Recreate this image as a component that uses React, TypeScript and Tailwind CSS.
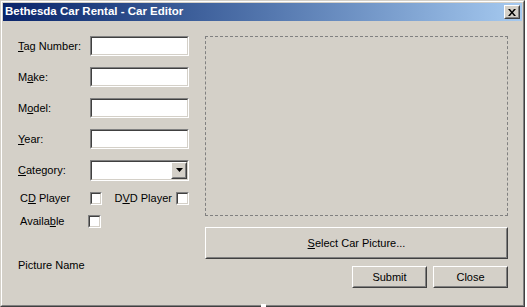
import type { ReactNode } from 'react'

const font = { fontFamily: '"Liberation Sans", Arial, sans-serif' }

function Sunken({ className, children }: { className?: string; children?: ReactNode }) {
  return (
    <div className={`border border-t-[#808080] border-l-[#808080] border-b-white border-r-white ${className ?? ''}`}>
      <div className="h-full w-full border border-t-[#404040] border-l-[#404040] border-b-[#d4d0c8] border-r-[#d4d0c8] bg-white">
        {children}
      </div>
    </div>
  )
}

function Raised({ className, children }: { className?: string; children?: ReactNode }) {
  return (
    <div className={`border border-t-white border-l-white border-b-[#404040] border-r-[#404040] ${className ?? ''}`}>
      <div className="flex h-full w-full items-center justify-center border border-t-[#d4d0c8] border-l-[#d4d0c8] border-b-[#808080] border-r-[#808080] bg-[#d4d0c8]">
        {children}
      </div>
    </div>
  )
}

function Field({ u, rest, pre = '' }: { pre?: string; u: string; rest: string }) {
  return (
    <div className="flex h-[20px] items-center">
      <span className="w-[72px] text-[11px] text-black">
        {pre}
        <span className="underline underline-offset-1">{u}</span>
        {rest}
      </span>
      <Sunken className="h-[20px] w-[99px]" />
    </div>
  )
}

export default function App() {
  return (
    <div className="relative h-[307px] w-[527px] bg-white" style={font}>
      <div className="h-[307px] w-[525px] border border-t-[#d4d0c8] border-l-[#d4d0c8] border-b-[#404040] border-r-[#404040]">
        <div className="flex h-full w-full flex-col border border-t-white border-l-white border-b-[#808080] border-r-[#808080] bg-[#d4d0c8] p-px">
          {/* Title bar */}
          <div className="flex h-[18px] items-center justify-between bg-gradient-to-r from-[#0a246a] to-[#a6caf0] pl-[2px] pr-[2px]">
            <span className="text-[11.5px] font-bold text-white">Bethesda Car Rental - Car Editor</span>
            <Raised className="h-[14px] w-[16px]">
              <svg width="8" height="7" viewBox="0 0 8 7">
                <path d="M0 0h2l2 2.5L6 0h2L5 3.5 8 7H6L4 4.5 2 7H0l3-3.5z" fill="#000" />
              </svg>
            </Raised>
          </div>

          {/* Body */}
          <div className="flex gap-[16px] pl-[15px] pt-[15px]">
            {/* Left column */}
            <div className="flex w-[171px] flex-col gap-[11px]">
              <Field u="T" rest="ag Number:" />
              <Field pre="M" u="a" rest="ke:" />
              <Field pre="M" u="o" rest="del:" />
              <Field u="Y" rest="ear:" />
              <div className="flex h-[20px] items-center">
                <span className="w-[72px] text-[11px] text-black">
                  <span className="underline underline-offset-1">C</span>ategory:
                </span>
                <Sunken className="h-[21px] w-[99px]">
                  <div className="flex h-full justify-end">
                    <Raised className="h-[17px] w-[16px]">
                      <svg width="7" height="4" viewBox="0 0 7 4">
                        <path d="M0 0h7L3.5 4z" fill="#000" />
                      </svg>
                    </Raised>
                  </div>
                </Sunken>
              </div>
              <div className="mt-[1px] flex h-[13px] items-center text-[11px] text-black">
                <span className="w-[72px] pl-[2px]">
                  C<span className="underline underline-offset-1">D</span> Player
                </span>
                <Sunken className="h-[13px] w-[13px]" />
                <span className="ml-[12px] w-[62px]">
                  D<span className="underline underline-offset-1">V</span>D Player
                </span>
                <Sunken className="h-[13px] w-[13px]" />
              </div>
              <div className="-mt-[1px] flex h-[13px] items-center text-[11px] text-black">
                <span className="w-[70px] pl-[2px]">
                  Availa<span className="underline underline-offset-1">b</span>le
                </span>
                <Sunken className="h-[13px] w-[13px]" />
              </div>
              <div className="mt-[18px] text-[11px] text-black">Picture Name</div>
            </div>

            {/* Right column */}
            <div className="flex w-[303px] flex-col">
              <div className="h-[180px] border border-dashed border-[#808080]" />
              <Raised className="mt-[11px] h-[32px] w-[303px]">
                <span className="text-[11px] text-black">
                  <span className="underline underline-offset-1">S</span>elect Car Picture...
                </span>
              </Raised>
              <div className="mt-[7px] flex justify-end gap-[6px]">
                <Raised className="h-[22px] w-[75px]">
                  <span className="text-[11px] text-black">Submit</span>
                </Raised>
                <Raised className="h-[22px] w-[75px]">
                  <span className="text-[11px] text-black">Close</span>
                </Raised>
              </div>
            </div>
          </div>
        </div>
      </div>
      <div className="absolute left-[261px] top-[304px] h-[3px] w-[5px] bg-white" />
    </div>
  )
}
